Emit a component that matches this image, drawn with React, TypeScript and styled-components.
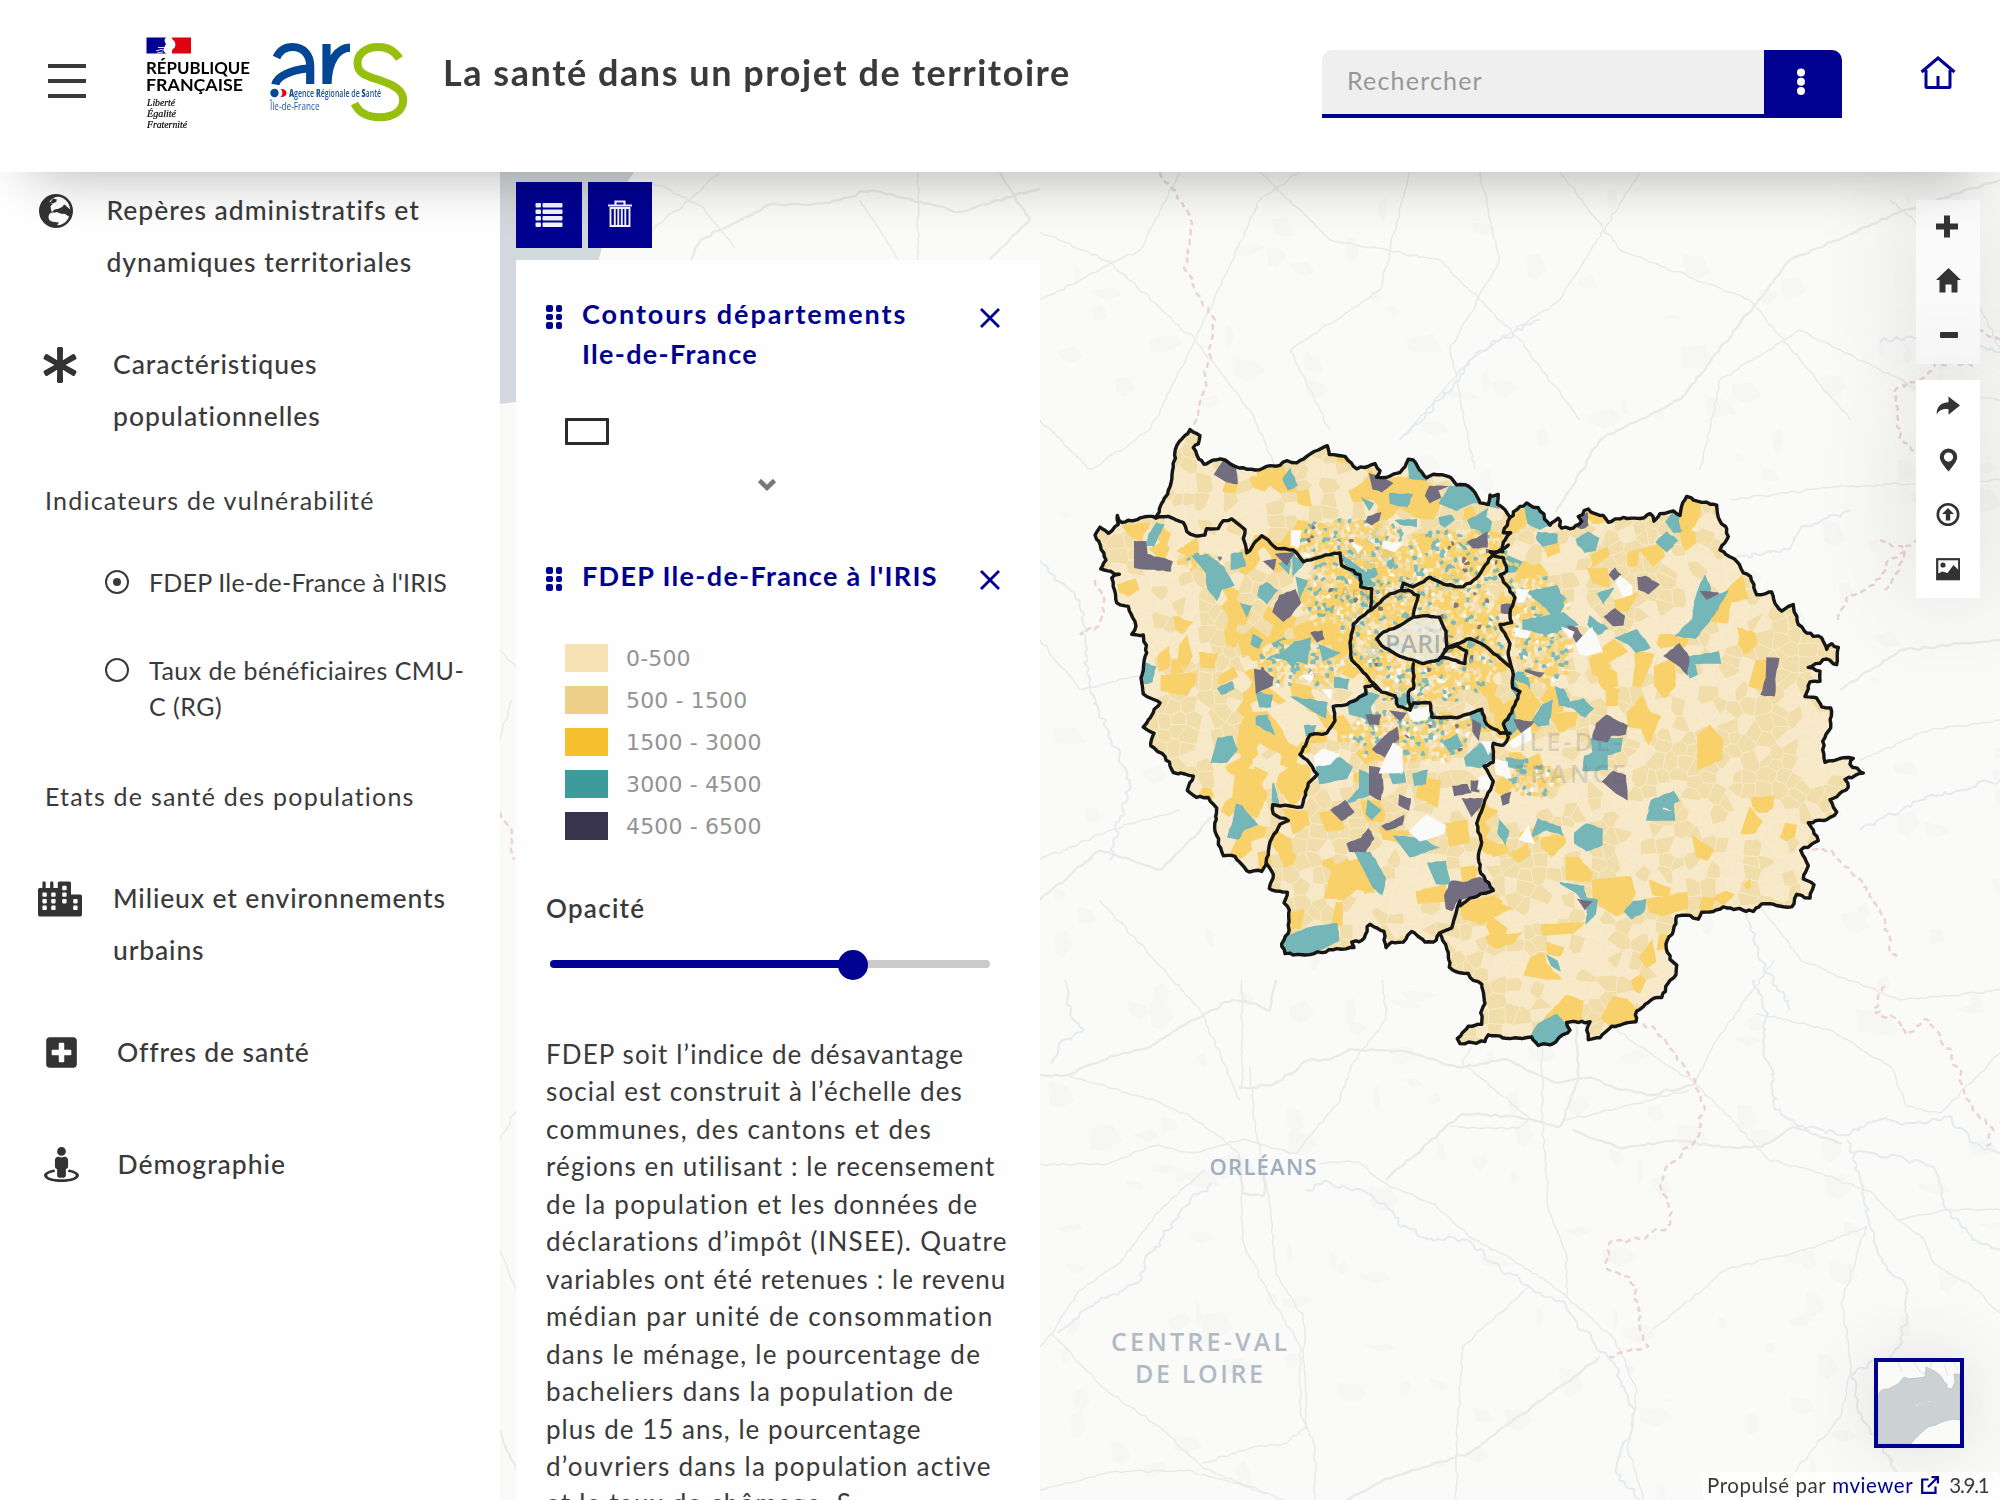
import React from "react";
import styled, { createGlobalStyle } from "styled-components";
import { FaAsterisk, FaCity, FaPlusSquare, FaStreetView } from "react-icons/fa";

const BLUE = "#000091";
const INK = "#3a3a3a";

const GlobalStyle = createGlobalStyle`
  * { box-sizing: border-box; }
  body { margin: 0; background: #fff; overflow: hidden; }
  h1, h2, p { margin: 0; }
  button { border: 0; padding: 0; font: inherit; background: none; }
`;

/* ---------- map geometry ---------- */

type Pt = [number, number];
type Frame = { x: number; y: number; sx: number; sy: number };
const WEST: Frame = { x: 1080, y: 410, sx: 3, sy: 2.8 };
const EAST: Frame = { x: 1460, y: 460, sx: 3, sy: 2.6133 };
const SOUTH: Frame = { x: 1040, y: 980, sx: 1.6333, sy: 3 };

const pts = (f: Frame, s: string): Pt[] =>
  s.trim().split(/\s+/).map((p) => {
    const [a, b] = p.split(",").map(Number);
    return [f.x + a / f.sx, f.y + b / f.sy];
  });
const raw = (s: string): Pt[] => s.trim().split(/\s+/).map((p) => p.split(",").map(Number) as Pt);

const rng = (seed: number) => () => {
  seed = (seed * 1664525 + 1013904223) >>> 0;
  return seed / 4294967296;
};

const roughen = (line: Pt[], amp: number, seed: number): Pt[] => {
  const r = rng(seed);
  const out: Pt[] = [line[0]];
  for (let i = 1; i < line.length; i++) {
    const [ax, ay] = line[i - 1];
    const [bx, by] = line[i];
    const n = Math.max(1, Math.round(Math.hypot(bx - ax, by - ay) / 4));
    for (let k = 1; k < n; k++) {
      const t = k / n;
      out.push([ax + (bx - ax) * t + (r() - 0.5) * amp, ay + (by - ay) * t + (r() - 0.5) * amp]);
    }
    out.push([bx, by]);
  }
  return out;
};
const toPath = (p: Pt[], close = false) =>
  "M" + p.map(([x, y]) => `${x.toFixed(1)} ${y.toFixed(1)}`).join("L") + (close ? "Z" : "");
const smooth = (p: Pt[]) => {
  let d = `M${p[0][0]} ${p[0][1]}`;
  for (let i = 1; i < p.length - 1; i++) {
    const mx = (p[i][0] + p[i + 1][0]) / 2;
    const my = (p[i][1] + p[i + 1][1]) / 2;
    d += `Q${p[i][0].toFixed(1)} ${p[i][1].toFixed(1)} ${mx.toFixed(1)} ${my.toFixed(1)}`;
  }
  const l = p[p.length - 1];
  return d + `L${l[0]} ${l[1]}`;
};

const northWest = pts(WEST, `228,302 250,255 270,215 280,160 290,100 330,55 360,72 355,95 340,105 350,125 372,152 400,140 435,140 465,158 525,168
  560,158 600,155 622,142 650,148 680,130 715,112 742,100 748,125 795,130 830,165 885,150 900,170 890,188 930,185 960,175 985,138 1000,140
  1040,190 1060,180 1110,188 1130,210 1165,213 1190,240 1200,260 1225,265 1230,238`);
const east = pts(EAST, `90,95 115,90 112,115 135,130 150,150 170,130 200,112 235,125 270,170 295,152 305,178 340,178 365,160 355,148 385,128
  405,140 430,145 445,163 490,150 540,153 570,140 582,160 600,140 640,133 660,145 665,120 680,95 715,108 770,118 775,150 800,180 805,200
  780,235 830,265 850,295 872,305 890,352 935,345 945,375 965,395 1000,378 1015,430 1040,452 1085,465 1100,495 1115,480 1135,490 1130,535
  1100,520 1045,542 1080,552 1080,578 1050,580 1035,618 1070,622 1085,645 1112,648 1112,700 1088,735 1095,790 1140,780 1180,780 1170,795
  1210,818 1155,835 1165,855 1110,888 1130,920 1100,940 1045,948 1075,995 1022,1020 1045,1060 1030,1095 1062,1110 1050,1145 1010,1135
  995,1168 905,1160 880,1180 790,1168 760,1180 725,1182 715,1200 690,1190 650,1192 640,1230 618,1265 630,1305 650,1320 648,1345 630,1360
  605,1405 575,1410 530,1440 528,1468 455,1480 420,1510 385,1515 380,1490 390,1468 320,1470 330,1490 280,1525 235,1530 215,1508 150,1512
  85,1502 75,1520 0,1525 -8,1512 25,1480 65,1475 62,1445 75,1420 65,1370 40,1360 25,1342 0,1340`);
const southWest = pts(WEST, `1108,1560 1105,1520 1078,1465 1060,1490 1035,1490 995,1460 970,1490 935,1490 918,1505 912,1460 870,1440 845,1485
  815,1490 822,1505 770,1508 690,1525 615,1522 605,1495 625,1465 628,1400 612,1380 622,1350 568,1340 580,1300 560,1270 545,1292 500,1290
  465,1250 430,1248 405,1180 410,1115 385,1085 350,1085 322,1065 340,1025 280,1015 255,970 212,940 222,905 190,888 240,820 190,795 183,750
  200,680 190,630 155,628 168,605 145,550 110,540 95,470 118,460 62,445 78,420 45,350 60,328 85,345 115,320 112,295 125,315 205,298 228,302`);
const region = toPath(roughen([...northWest, ...east, ...southWest], 2.2, 7), true);

const inner: Pt[][] = [
  pts(WEST, "228,302 265,298 310,315 320,340 345,352 375,350 380,332 415,332 430,310 455,305 495,335 490,360 500,400 515,385 545,352 590,388 640,392 670,425 750,405 780,400 785,435 840,462 842,495 875,500 872,560"),
  pts(WEST, "1000,575 1015,520 985,505 965,505 930,515 872,560 820,600 810,650 815,700 850,735 880,765 905,790 945,800 955,830 990,840 985,790 1000,780 1000,710"),
  pts(WEST, "890,640 910,622 950,608 1000,580 1040,576 1078,580 1098,620 1100,670 1075,700 1030,710 960,690 905,660 890,640"),
  pts(WEST, "1095,670 1130,660 1160,675 1155,710 1105,695 1080,695"),
  pts(WEST, "965,500 970,485 1000,495 1050,468 1100,490 1150,495 1190,470 1235,410 1285,378"),
  pts(EAST, "150,150 130,190 152,190 130,215 128,240 90,240 105,252 130,255 140,290 120,300 165,360 150,400 155,425 120,430 150,480 145,510 160,560 158,595 180,605 155,660 130,690 145,725 130,745 100,740 100,790 72,800 100,840 80,880 50,950 65,1000 55,1040 62,1080 100,1125 30,1145 0,1165"),
  pts(WEST, "1140,1375 1130,1400 1115,1450 1078,1465"),
  pts(WEST, "1100,665 1130,655 1170,640 1215,660 1260,695 1292,720"),
  pts(WEST, "990,840 1000,820 1050,820 1055,860 1130,862 1170,850 1205,838 1220,880 1260,905 1290,905"),
  pts(WEST, "900,785 880,770 855,775 858,795 800,825 760,830 765,870 740,905 690,910 660,965 690,990 712,1020 685,1045 665,1112 578,1105 580,1130 625,1150 600,1160 570,1210 558,1270"),
];

/* ---------- choropleth cells ---------- */

const PALETTE = ["#f7e9c8", "#f1dda9", "#f8d16a", "#74b6b8", "#736d80", "#fafaf9"];

const noise = (x: number, y: number) =>
  (Math.sin(x * 0.031 + y * 0.017) + Math.sin(y * 0.041 - x * 0.013 + 2) + Math.sin((x + y) * 0.023 + 5)) / 3;

const clip = (poly: Pt[], a: Pt, b: Pt): Pt[] => {
  const mx = (a[0] + b[0]) / 2;
  const my = (a[1] + b[1]) / 2;
  const nx = b[0] - a[0];
  const ny = b[1] - a[1];
  const side = (p: Pt) => (p[0] - mx) * nx + (p[1] - my) * ny;
  const out: Pt[] = [];
  poly.forEach((p, i) => {
    const q = poly[(i + 1) % poly.length];
    const s = side(p);
    const t = side(q);
    if (s <= 0) out.push(p);
    if ((s < 0 && t > 0) || (s > 0 && t < 0)) {
      const k = s / (s - t);
      out.push([p[0] + (q[0] - p[0]) * k, p[1] + (q[1] - p[1]) * k]);
    }
  });
  return out;
};

type Box = [number, number, number, number];
const cells = (box: Box, step: number, seed: number, pick: (x: number, y: number, r: number) => number) => {
  const r = rng(seed);
  const cols = Math.ceil((box[2] - box[0]) / step);
  const rows = Math.ceil((box[3] - box[1]) / step);
  const seeds: Pt[][] = [];
  for (let j = 0; j < rows; j++) {
    seeds.push([]);
    for (let i = 0; i < cols; i++) seeds[j].push([box[0] + (i + 0.05 + r() * 0.9) * step, box[1] + (j + 0.05 + r() * 0.9) * step]);
  }
  const out = PALETTE.map(() => "");
  for (let j = 0; j < rows; j++)
    for (let i = 0; i < cols; i++) {
      const c = seeds[j][i];
      const k = pick(c[0], c[1], r());
      if (k < 0) continue;
      const w = step * 1.6;
      let poly: Pt[] = [[c[0] - w, c[1] - w], [c[0] + w, c[1] - w], [c[0] + w, c[1] + w], [c[0] - w, c[1] + w]];
      for (let dj = -2; dj <= 2; dj++)
        for (let di = -2; di <= 2; di++) {
          const o = seeds[j + dj]?.[i + di];
          if (o && (di || dj)) poly = clip(poly, c, o);
        }
      if (poly.length > 2) out[k] += toPath(poly, true);
    }
  return out;
};

const gauss = (x: number, y: number, cx: number, cy: number, s: number) =>
  Math.exp(-((x - cx) ** 2 + (y - cy) ** 2) / (s * s));

const coarse = cells([1085, 420, 1880, 1055], 14, 11, (x, y, r) => {
  const near = gauss(x, y, 1415, 610, 115);
  const yellow = 0.025 + 0.5 * near + 0.04 * noise(x * 1.7, y * 1.7) + (x < 1310 && x > 1230 && y > 540 ? 0.1 : 0);
  const teal = 0.001 + 0.07 * near;
  if (r < teal) return 3;
  if (r < teal + yellow) return 2;
  const u = (r - teal - yellow) / (1 - teal - yellow);
  return u < 0.52 - 0.5 * noise(x, y) ? 1 : 0;
});

const urban: [number, number, number, number][] = [
  [1425, 632, 82, 70], [1350, 545, 58, 26], [1450, 560, 62, 30], [1410, 735, 65, 26], [1545, 635, 30, 50],
  [1300, 665, 42, 22], [1200, 562, 22, 10], [1535, 780, 26, 16], [1330, 600, 30, 26], [1530, 590, 30, 14],
];
const fine = cells([1170, 500, 1600, 820], 3.8, 23, (x, y, r) => {
  const inside = urban.some(([cx, cy, rx, ry]) => ((x - cx) / rx) ** 2 + ((y - cy) / ry) ** 2 < 1 + 0.3 * noise(x * 7, y * 7));
  if (!inside) return -1;
  const n = noise(x * 6, y * 6) * 0.1;
  if (r < 0.44) return 2;
  if (r < 0.64) return 0;
  if (r < 0.83 - n) return 1;
  if (r < 0.955) return 3;
  if (r < 0.966) return 4;
  return 5;
});

const patch = (f: Frame, fill: number, list: string[]) => ({ fill, d: list.map((s) => toPath(roughen(pts(f, s), 1.2, s.length), true)).join("") });
const patches = [
  patch(WEST, 2, [
    "530,170 610,160 615,185 590,205 540,200", "810,230 870,190 860,160 890,190 960,200 1000,180 1050,210 1080,260 1060,305 1010,300 960,270 930,300 880,250 820,255",
    "745,470 790,445 835,465 840,500 840,560 800,575 745,570 700,590 690,545 720,520", "130,325 205,318 180,365 150,350", "295,395 350,360 355,410 320,405",
    "115,490 165,475 175,500 145,520 120,510", "285,580 335,595 305,625 288,612", "300,660 320,635 335,690 315,722 296,700", "235,690 265,665 268,715 240,730",
    "245,745 345,738 345,760 320,798 245,785", "360,680 410,685 400,720 365,718", "420,745 460,722 472,745 430,765 415,765", "440,560 480,540 510,570 490,600 450,590",
    "475,640 510,620 515,680 490,690", "600,650 650,640 640,610 700,590 720,630 640,690 600,680", "470,1000 520,1010 560,1080 530,1140 480,1110 460,1080", "500,850 560,845 600,890 620,930 660,950 640,1000 600,960 540,930 470,960 480,890",
    "600,1020 650,990 690,1010 680,1060 640,1110 590,1050", "580,1180 630,1200 635,1230 600,1240 580,1220", "610,1120 680,1125 685,1160 640,1185 630,1150", "720,1130 770,1120 790,1170 740,1178",
    "760,1280 800,1260 870,1300 880,1350 830,1340 790,1370 735,1365", "1010,1350 1095,1330 1095,1375 1015,1380", "630,1410 670,1400 660,1450 635,1450", "770,1380 785,1380 785,1440 755,1450", "1100,1160 1160,1150 1165,1210 1110,1220", "830,960 880,930 900,970 860,990",
    "1020,1030 1080,1040 1070,1110 1010,1080", "1150,1400 1230,1370 1290,1395 1200,1440", "900,1170 960,1180 990,1180 960,1210 910,1200",
  ]),
  patch(EAST, 2, [
    "135,190 170,130 200,130 195,170 150,195", "255,230 295,220 298,240 265,252", "385,130 440,160 400,165 385,150", "660,160 668,120 690,95 720,120 715,150 690,185 665,180", "505,245 535,235 530,275 505,275", "540,235 600,222 612,250 580,275",
    "395,250 440,230 445,250 400,275", "385,285 440,285 448,330 400,320", "750,420 790,350 845,305 862,360 810,370 800,425", "465,370 530,350 500,395 470,390", "835,440 872,450 870,500 852,505", "870,590 890,525 930,525 905,600",
    "390,520 460,470 500,500 440,530 455,565 400,560", "525,495 580,510 550,575 530,560", "585,540 640,520 645,590 615,620 585,590", "440,590 475,600 470,640 440,640", "505,660 545,620 570,660 600,670 580,710 565,740 545,700 505,695",
    "715,720 750,695 785,730 785,780 715,808", "270,665 350,660 345,690 300,710", "875,885 940,880 935,910 880,905", "870,910 905,945 880,975 845,975", "700,985 760,1020 740,1045 710,1035", "855,1110 868,1100 870,1115 860,1118",
    "400,1100 510,1090 525,1130 500,1180 470,1190 400,1150", "320,1040 355,1040 395,1080 390,1100 320,1095", "570,1100 630,1120 625,1140 580,1135", "560,1150 680,1130 680,1170 610,1190 570,1180", "245,1215 370,1210 340,1235 250,1240", "80,1245 180,1238 160,1260 110,1275 85,1262",
    "195,1345 215,1300 250,1290 260,1320 300,1355 255,1355", "262,1262 310,1275 300,1295 265,1290", "540,1300 575,1258 585,1310 560,1325", "255,1460 320,1400 368,1415 360,1465 320,1470 300,1480", "425,1460 460,1405 500,1410 530,1440 528,1468 455,1480",
    "0,1160 100,1140 125,1155 90,1175 40,1205 10,1195", "75,1010 135,1005 145,1025 100,1035", "150,1030 200,1005 208,1030 175,1050", "245,990 310,980 315,1000 275,1035 245,1010", "105,660 185,610 170,580 200,590 240,640 220,660 240,700 200,720 165,740 110,720",
  ]),
  patch(WEST, 3, [
    "230,318 250,322 220,380 195,378 215,340", "610,195 630,168 650,210 625,222", "985,140 1000,150 1035,195 990,190", "930,235 995,238 980,270 932,260", "1080,260 1110,215 1160,220 1195,250 1130,280", "1165,310 1220,280 1210,330 1175,330", "850,250 878,262 868,278", "950,310 1008,308 1008,325 960,318",
    "340,410 380,405 430,440 460,490 425,500 410,530 385,500 380,455", "455,405 485,400 495,435 455,445", "540,495 560,485 590,505 560,540 535,520", "485,545 512,550 500,575", "520,630 545,645 535,665 515,655", "195,710 225,720 215,760 190,765", "415,780 455,762 460,780 425,795",
    "645,650 690,640 680,710 650,700 640,720 620,700 580,690 610,680", "720,660 775,680 730,700", "530,790 575,800 570,830 540,830", "530,860 560,855 580,905 530,880", "640,805 740,820 735,860 680,830", "415,920 455,915 470,950 440,985 395,985", "470,1105 485,1110 530,1160 490,1175 475,1200 445,1195 460,1155", "580,1045 595,1105 578,1095",
    "675,885 705,885 700,910 680,910", "765,750 805,755 800,780 765,775", "805,820 860,790 895,800 870,830 880,890 850,860 810,850", "710,1000 780,975 815,1000 800,1030 720,1045", "840,1010 865,1020 870,1075 800,1100 840,1060", "825,1235 870,1240 915,1310 905,1355 880,1335", "945,1195 1020,1200 1070,1225 990,1250", "1045,1270 1095,1265 1108,1325 1070,1325",
    "865,1095 900,1120 875,1145 860,1130", "1090,930 1130,910 1145,940 1110,955", "1155,975 1200,935 1240,970 1200,1000 1160,995", "1000,1020 1040,1010 1035,1045 1005,1050", "930,1020 970,1015 975,1040 940,1045", "610,1480 690,1450 770,1440 775,1485 690,1525 600,1530", "1170,850 1205,838 1215,890 1180,880", "640,410 670,430 640,460", "790,410 850,450 880,490 850,490 800,440", "600,430 630,425 625,455", "650,470 680,480 660,520",
  ]),
  patch(EAST, 3, [
    "0,62 20,70 55,110 0,112", "90,90 112,92 115,125 90,120", "195,118 240,130 265,170 240,180 205,165", "235,190 290,195 290,215 250,225 230,205", "350,208 385,190 415,205 405,235 375,240 355,222", "590,215 620,190 650,210 620,238", "415,350 460,335 430,372", "205,345 290,330 310,380 290,415 250,380", "190,420 310,400 350,430 260,455 190,440",
    "720,330 735,305 750,335 745,362 800,345 760,405 738,430 705,465 650,458 700,415 705,370", "470,465 530,445 568,490 530,502 505,480", "690,515 775,503 780,530 700,530 710,560 690,568 680,545", "288,595 310,600 330,635 370,625 398,650 375,670 335,645 300,640", "220,680 250,640 275,630 265,690 235,695", "395,730 485,728 480,760 440,770 440,808 370,810 375,775 400,765",
    "562,940 575,890 640,868 655,890 640,895 640,915 610,905 600,915 640,920 642,940", "345,975 380,952 425,965 425,1005 380,1020 345,1000", "120,945 145,970 135,1000 115,975", "235,940 300,960 305,978 260,965 215,985", "300,1105 370,1115 375,1145 410,1150 405,1185 380,1208 385,1165 350,1130", "495,1180 520,1155 555,1150 550,1180 515,1198",
    "215,1505 235,1475 290,1450 325,1485 280,1525 235,1530", "265,1298 290,1310 298,1332 275,1320", "130,685 160,655 170,700 150,720", "140,780 190,785 185,805 145,800", "390,410 440,440 415,455 385,430",
  ]),
  patch(WEST, 4, [
    "405,180 430,145 465,158 470,205 440,200", "870,180 900,188 935,205 905,228 880,220", "1038,240 1050,215 1095,215 1070,225 1080,245 1050,258", "865,300 900,290 895,308 875,320 860,312", "165,370 195,370 200,405 275,425 270,450 165,440", "555,425 585,420 580,445", "590,405 640,400 620,432", "580,565 600,520 645,505 660,540 625,580 610,590", "695,625 725,620 730,640 712,648",
    "525,728 548,730 578,750 575,770 530,790", "860,855 900,855 895,880 870,878", "915,915 950,890 955,920 935,935 915,970 880,950", "870,1000 900,1005 908,1060 900,1090 870,1075", "755,1120 795,1095 820,1125 785,1148", "960,1080 990,1090 985,1118 958,1105", "908,1165 970,1138 965,1160 920,1175", "803,1215 845,1200 865,1175 880,1200 855,1235 810,1235",
    "1095,1360 1115,1320 1150,1325 1200,1310 1240,1340 1130,1375 1115,1400 1100,1395", "1165,370 1220,345 1220,382 1180,385", "1120,1055 1160,1050 1170,1070 1125,1078", "1150,1090 1205,1090 1200,1110 1175,1135", "1175,1040 1195,1040 1195,1068 1175,1065", "935,845 975,850 960,868", "1180,870 1200,880 1195,920 1180,900",
  ]),
  patch(EAST, 4, [
    "345,172 380,140 382,170 365,178", "535,308 555,305 595,325 565,348 538,338", "435,410 465,390 492,408 488,430 460,432", "325,435 350,440 365,460 350,475", "615,512 658,482 685,515 680,558 655,535", "725,345 775,348 740,362", "922,518 955,520 945,560 942,615 905,612 920,570", "165,680 218,685 190,720 175,700",
    "400,720 410,690 440,668 500,695 495,715 450,720 440,735 400,728", "430,840 460,815 495,825 500,885 470,870", "358,1150 392,1155 375,1172", "195,550 248,558 240,566", "450,300 465,285 480,300 462,312", "125,380 150,378 145,400 125,398", "125,880 150,870 145,895 130,900",
  ]),
  patch(EAST, 5, [
    "350,480 395,440 425,500 380,510 360,505", "170,340 205,340 190,370 175,370", "480,305 515,330 515,350 490,355 470,320", "150,740 210,700 210,730 160,750", "105,785 140,790 150,830 110,820", "310,440 340,450 330,465", "165,440 210,450 200,465 168,458", "205,960 220,1000 180,990",
  ]),
  patch(WEST, 5, [
    "635,340 662,340 655,382 635,378", "910,370 965,375 945,395 910,385", "705,970 730,950 775,965 750,990 708,995", "920,970 940,935 965,950 965,1015 900,1015", "985,845 1050,830 1040,865 1000,870", "990,1180 1040,1135 1095,1165 1090,1185 1020,1205", "1210,930 1240,930 1225,960", "1200,1030 1230,1020 1225,1060 1195,1060", "820,375 845,385 835,398", "670,745 700,742 690,760", "730,785 755,785 750,805",
  ]),
];

/* ---------- base map lines ---------- */

const roads: Pt[][] = [
  pts(SOUTH, "0,285 45,285 100,240 180,200 240,130 315,58 350,70 375,95 385,0"),
  pts(SOUTH, "45,285 200,370 265,430 325,520"), pts(SOUTH, "0,553 110,553 190,495 250,520 330,478 380,505 420,520 440,470 490,360 510,250 565,120 560,0"),
  pts(SOUTH, "330,320 330,0"), pts(SOUTH, "343,260 350,420 375,660 385,880 430,1010 435,1340 400,1390 350,1400 265,1450"),
  pts(SOUTH, "325,325 380,315 440,240 475,240 510,207 590,212 680,260 765,240 840,308 900,292 940,325 1000,345 1070,310"),
  pts(SOUTH, "1070,310 950,160 870,50"), pts(SOUTH, "1070,310 1105,180 1165,30 1200,-60"), pts(SOUTH, "1070,310 1130,420 1190,540 1260,570 1360,640 1400,720 1440,770 1460,850 1530,930 1568,1000"),
  pts(SOUTH, "330,640 330,780 370,930 425,1100 425,1300 450,1400 448,1560"), pts(SOUTH, "325,520 330,640 365,650 365,560"),
  pts(SOUTH, "270,570 190,700 130,850 60,940 20,1060 0,1100"), pts(SOUTH, "20,1060 100,1220 200,1350 265,1460 300,1490 400,1560"), pts(SOUTH, "0,1530 120,1475 240,1470 300,1500 370,1540"),
  pts(SOUTH, "455,550 520,545 570,620 640,670 710,780 800,870 860,950 940,1080 975,1230 960,1400 985,1560"), pts(SOUTH, "565,600 690,400 800,415 850,440 880,290 870,0"),
  pts(SOUTH, "820,0 820,400 830,680 860,830 860,950"), pts(SOUTH, "670,440 780,445 800,415 690,250 705,200"), pts(SOUTH, "800,920 690,1100 680,1400 680,1560"), pts(SOUTH, "860,420 950,380 1060,330"),
  pts(SOUTH, "870,450 950,505 1040,480 1100,500 1180,500 1230,440 1310,490"), pts(SOUTH, "1000,1050 1120,870 1250,810 1350,740"), pts(SOUTH, "1350,740 1310,960 1325,1160 1310,1300 1230,1480 1200,1560"), pts(SOUTH, "1400,720 1480,690 1568,690"), pts(SOUTH, "1170,100 1290,150 1390,260 1415,380 1470,400 1568,220"),
  pts(SOUTH, "915,1130 850,1220 790,1300 700,1420 560,1500 500,1560"),
  raw("1040,232 1110,262 1195,340 1250,410 1290,500"), raw("1040,420 1090,470 1150,430 1200,330 1260,200 1300,172"), raw("1330,430 1290,350 1380,290 1410,172"), raw("1400,440 1470,360 1560,300 1640,172"),
  raw("1556,512 1600,440 1680,400 1790,260 1900,212 2000,180"), raw("1730,500 1830,487 2000,480"), raw("1700,470 1720,380 1800,330 1920,390 2000,400"), raw("1890,200 1960,260 2000,350"), raw("1480,172 1500,260 1450,350 1475,470"),
  raw("1840,690 1900,650 2000,640"), raw("1860,760 1930,730 2000,720"), raw("1740,880 1800,960 1900,1000 2000,990"), raw("1040,640 1080,690 1144,674"), raw("1040,860 1110,830 1180,810"), raw("1040,900 1100,850 1160,870 1220,810"),
  raw("1040,300 1140,250 1180,172"), raw("1260,172 1330,240 1440,260 1520,340 1580,420"), raw("1560,172 1620,250 1750,300 1850,420"), raw("1100,900 1200,1010 1240,1100"),
  raw("690,262 700,240 720,230 770,205 830,203 870,190 960,212 1040,188"), raw("640,240 690,200 720,172"), raw("652,182 700,205 735,248"), raw("860,200 900,262"), raw("918,172 918,260"), raw("990,260 1030,220 1000,172"),
  raw("500,650 516,668"), raw("500,740 512,700"), raw("500,1140 516,1110"), raw("500,1250 516,1290"), raw("500,1430 516,1470"),
];
const rivers: Pt[][] = [
  pts(SOUTH, "280,610 230,690 210,750 170,850 160,910 90,965 30,1060"), pts(SOUTH, "435,630 470,605 540,640 565,680 590,740 640,775 700,780 740,850 800,920 860,980 900,1080 940,1160 970,1300 940,1480 980,1560"),
  pts(SOUTH, "20,250 30,200 70,155 50,100 40,0"), pts(SOUTH, "1165,0 1190,100 1180,180 1200,300 1200,390 1240,440 1310,465 1370,420 1430,430 1480,410 1530,490 1568,520"), pts(SOUTH, "1320,480 1340,600 1365,800 1390,880 1415,920 1410,1060 1390,1130 1325,1180 1340,1300 1400,1480"),
  pts(SOUTH, "1330,520 1400,530 1460,560 1480,690 1530,780 1568,810"), raw("1880,342 1910,336 1930,350 1980,345 2000,352"), raw("1700,540 1730,560 1790,550 1800,530 1850,510"), raw("1860,830 1920,800 2000,780"), raw("1040,560 1080,600 1090,690 1130,780 1110,860"), raw("1400,440 1440,400 1480,350 1540,320"), raw("1700,865 1740,890 1760,960 1790,1010"),
];
const borders: Pt[][] = [
  raw("1160,172 1190,215 1185,270 1215,320 1205,380 1195,425"), pts(SOUTH, "985,130 1020,170 1040,240 1070,310 1085,380 1070,480 1030,550 1015,610 1030,690 1025,745 980,775 930,790 925,860 960,890 980,980 980,1050 995,1100 930,1130"), pts(SOUTH, "1380,20 1360,90 1400,120 1415,165 1445,115 1470,170 1500,260 1510,340 1530,400 1555,440 1548,510"),
  raw("1838,620 1850,595 1875,585 1890,560 1920,540 1950,530"), raw("1973,366 1955,362 1935,365 1920,380 1895,390 1900,440 1915,450"), raw("1812,850 1830,850 1850,870 1880,910 1895,960"), raw("1880,540 1905,550 1900,570 1885,590"), raw("1095,580 1105,600 1100,625 1080,635"), raw("1950,355 1975,330 2000,340"), raw("500,812 512,830 514,860"),
];

const woods = (() => {
  const r = rng(91);
  let d = "";
  for (let i = 0; i < 260; i++) {
    const x = 1045 + r() * 950;
    const y = 180 + r() * 1310;
    const w = 4 + r() * 22;
    d += `M${x} ${y}l${w} ${(r() - 0.6) * 12}l${w * 0.4} ${4 + r() * 14}l${-w * 0.7} ${r() * 12}l${-w * 0.6} ${-r() * 8}Z`;
  }
  return d;
})();

const MapCanvas = () => (
  <Canvas viewBox="500 172 1500 1328">
    <defs>
      <clipPath id="region"><path d={region} /></clipPath>
      <filter id="soften"><feGaussianBlur stdDeviation="0.7" /></filter>
    </defs>
    <rect x="500" y="172" width="1500" height="1328" fill="#fafaf9" />
    <path d="M500 172H634L626 184 612 212 598 262 560 330 516 402 500 404Z" fill="#d2d9dc" />
    <path d={woods} fill="#f6f7f5" />
    <g fill="none" strokeLinejoin="round">
      {roads.map((p, i) => <path key={i} d={smooth(roughen(p, 3, i + 3))} stroke="#e9eaea" strokeWidth={i % 5 === 0 ? 2.4 : 1.5} />)}
      {rivers.map((p, i) => <path key={i} d={smooth(roughen(p, 7, i + 60))} stroke="#e6ebee" strokeWidth="2" />)}
      {borders.map((p, i) => <path key={i} d={smooth(roughen(p, 6, i + 40))} stroke="#ecd2d7" strokeWidth="2.4" strokeDasharray="6 4" />)}
    </g>
    <g fontFamily="'Open Sans', sans-serif" fontWeight="600" fill="#b0bac5" textAnchor="middle">
      <text x="1263" y="1175" fontSize="22" textLength="107" fill="#9fadbd">ORLÉANS</text>
      <text x="1199" y="1351" fontSize="25" textLength="176">CENTRE-VAL</text>
      <text x="1199" y="1383" fontSize="25" textLength="128">DE LOIRE</text>
    </g>
    <g filter="url(#soften)">
      <g clipPath="url(#region)">
        <rect x="1085" y="420" width="800" height="640" fill="#f4e4bb" />
        {coarse.map((d, i) => <path key={i} d={d} fill={PALETTE[i]} stroke={i > 1 ? PALETTE[i] : "#f8edd2"} strokeWidth="0.5" />)}
        {patches.slice(0, 2).map((p, i) => <path key={i} d={p.d} fill={PALETTE[p.fill]} stroke={PALETTE[p.fill]} strokeWidth="2" />)}
        <g opacity="0.9">{fine.map((d, i) => <path key={i} d={d} fill={PALETTE[i]} />)}</g>
        {patches.slice(2).map((p, i) => <path key={i} d={p.d} fill={PALETTE[p.fill]} stroke={PALETTE[p.fill]} strokeWidth="2" />)}
        <path d={toPath(inner[2], true)} fill="#e9ece6" opacity="0.75" />
      </g>
    </g>
    <g fontFamily="'Open Sans', sans-serif" fontWeight="600" textAnchor="middle" fill="#5e6a78" filter="url(#soften)">
      <text x="1420" y="653" fontSize="25" textLength="70" opacity="0.42">PARIS</text>
      <text x="1570" y="751" fontSize="25" textLength="102" opacity="0.2">ILE-DE-</text>
      <text x="1570" y="783" fontSize="25" textLength="112" opacity="0.2">FRANCE</text>
      <text x="1386" y="598" fontSize="16" textLength="92" opacity="0.2">Argenteuil</text>
    </g>
    <g fill="none" stroke="#141414" strokeWidth="3.4" strokeLinejoin="round" strokeLinecap="round" filter="url(#soften)">
      <path d={region} />
      {inner.map((p, i) => <path key={i} d={toPath(roughen(p, i === 2 ? 0.8 : 1.6, i + 20))} />)}
    </g>
  </Canvas>
);

/* ---------- header ---------- */

const Page = styled.div`
  width: 2000px;
  height: 1500px;
  display: flex;
  flex-direction: column;
  overflow: hidden;
  color: ${INK};
  font-family: Lato, "Open Sans", sans-serif;
`;
const Header = styled.header`
  position: relative;
  z-index: 2;
  flex: none;
  height: 172px;
  display: flex;
  align-items: flex-start;
  background: #fff;
  box-shadow: 0 30px 60px -30px rgba(0, 0, 0, 0.32);
`;
const MenuButton = styled.button`
  display: flex;
  flex-direction: column;
  gap: 11px;
  margin: 64px 60px 0 48px;
  width: 38px;
`;
const MenuBar = styled.span`
  height: 4px;
  background: #3a3a3a;
`;
const Logos = styled.svg`
  width: 262px;
  height: 100px;
  margin-top: 34px;
  flex: none;
`;
const SiteTitle = styled.h1`
  width: 879px;
  margin: 49px 0 0 35px;
  font-size: 36px;
  line-height: 46px;
  font-weight: 700;
  white-space: nowrap;
  letter-spacing: 1.55px;
`;
const Search = styled.div`
  width: 520px;
  height: 68px;
  margin-top: 50px;
  display: flex;
  border-bottom: 4px solid ${BLUE};
  border-radius: 10px 10px 0 0;
  overflow: hidden;
`;
const Field = styled.div`
  flex: 1;
  padding-left: 25px;
  font-size: 25px;
  line-height: 60px;
  letter-spacing: 1.2px;
  color: #979797;
  background: #efefef;
`;
const SearchOptions = styled.button`
  width: 78px;
  padding-right: 4px;
  display: flex;
  align-items: center;
  justify-content: center;
  background: ${BLUE};
`;
const HomeLink = styled.svg`
  margin: 53px 0 0 78px;
  width: 36px;
  height: 38px;
`;

const Brand = () => (
  <Logos viewBox="146 34 262 100">
    <rect x="146.500" y="37.500" width="20" height="16" fill="#000091" />
    <rect x="172" y="37.500" width="19" height="16" fill="#e1000f" />
    <path d="M166 37.500C164 39 164 42 166 44C164 47 162 51 166 53.500H171C170 50 174 49 175 47C176 44 175 41 173 40C172 38 171 37.500 170 37.500Z" fill="#fff" />
    <path d="M156 51l5-1.500 5 1M158 47.500l6 0M157 53l6-1" stroke="#fff" strokeWidth="0.9" fill="none" />
    <g fontFamily="Lato, sans-serif" fontWeight="700" fontSize="17" fill="#000">
      <text x="146" y="73.500" textLength="104" lengthAdjust="spacingAndGlyphs">RÉPUBLIQUE</text>
      <text x="146" y="91" textLength="97" lengthAdjust="spacingAndGlyphs">FRANÇAISE</text>
    </g>
    <g fontFamily="'Liberation Serif', serif" fontStyle="italic" fontSize="10" fill="#000" stroke="#000" strokeWidth="0.2">
      <text x="147" y="106" textLength="28" lengthAdjust="spacingAndGlyphs">Liberté</text>
      <text x="147" y="117" textLength="29" lengthAdjust="spacingAndGlyphs">Égalité</text>
      <text x="147" y="128" textLength="40" lengthAdjust="spacingAndGlyphs">Fraternité</text>
    </g>
    <g fill="none" stroke="#034694" strokeWidth="8.200">
      <path d="M276.500 57.500C280 50 286 47 292.500 47C303.500 47 310.200 55 310.200 66V84" />
      <path d="M307 68.500C292 70 277 76 275.300 84.500" />
      <path d="M326.500 44V84M327.500 84C328 60 338 48 350 47.700" />
    </g>
    <path d="M399.500 58.500C394 50 387 47 378 47C366 47 357.500 54 357.500 63C357.500 74 367 76 379 80C394 85 403.200 90 403.200 100C403.200 111 393 117.300 380 117.300C368 117.300 359 113 354.500 103.500" fill="none" stroke="#97bf0d" strokeWidth="8" />
    <circle cx="274.500" cy="93" r="4.200" fill="#034694" />
    <path d="M280.500 89C285 89 286.500 91 286.500 93S285 97 280.500 97C283 95 283 91 280.500 89Z" fill="#e1000f" />
    <g fontFamily="'Open Sans', sans-serif" fontSize="10" fill="#1d4f9c">
      <text x="289" y="97.200" fontWeight="600" textLength="92" lengthAdjust="spacingAndGlyphs">
        <tspan fontWeight="800">A</tspan>gence <tspan fontWeight="800">R</tspan>égionale de <tspan fontWeight="800">S</tspan>anté
      </text>
      <text x="270" y="109.500" textLength="49.500" fontWeight="500" lengthAdjust="spacingAndGlyphs">Île-de-France</text>
    </g>
  </Logos>
);

/* ---------- side navigation ---------- */

const Body = styled.div`
  flex: 1;
  display: flex;
  min-height: 0;
`;
const Sidebar = styled.nav`
  width: 500px;
  flex: none;
  padding-top: 12px;
  background: #fff;
`;
const Theme = styled.div<{ $gap?: number }>`
  display: flex;
  margin-top: ${(p) => p.$gap ?? 0}px;
`;
const ThemeIcon = styled.span<{ $inset: number; $slot: number }>`
  flex: none;
  width: ${(p) => p.$slot}px;
  height: 53px;
  padding-left: ${(p) => p.$inset}px;
  display: flex;
  align-items: center;
`;
const ThemeLabel = styled.span<{ $track?: number }>`
  width: 350px;
  font-size: 26.5px;
  line-height: 52px;
  font-weight: 500;
  letter-spacing: ${(p) => p.$track ?? 0.98}px;
`;
const Group = styled.div<{ $gap: number }>`
  margin: ${(p) => p.$gap}px 0 0 45px;
  font-size: 25px;
  line-height: 36px;
  letter-spacing: 1.22px;
`;
const Choice = styled.label<{ $gap: number; $track: number }>`
  display: flex;
  margin: ${(p) => p.$gap}px 0 0 105px;
  font-size: 25px;
  line-height: 36px;
  letter-spacing: ${(p) => p.$track}px;
`;
const Radio = styled.span`
  flex: none;
  width: 24px;
  height: 24px;
  margin: 6px 20px 0 0;
  border: 2px solid ${INK};
  border-radius: 50%;
  display: flex;
  align-items: center;
  justify-content: center;
`;
const RadioDot = styled.span`
  width: 8px;
  height: 8px;
  border-radius: 50%;
  background: ${INK};
`;

const Globe = () => (
  <svg width="34" height="34" viewBox="0 0 34 34">
    <circle cx="17" cy="17" r="17" fill="#333" />
    <path d="M10.500 7.500C13 4.500 16 2.800 19 2.700C25 3 30.500 8 31.300 15.500L29.500 14L27.500 12.500L26 10.500L24 11.500L23.500 13.500L20.500 15L15.500 15.500L13 18L12 16L11.500 12L13.500 10.500L12 9Z" fill="#fff" />
    <path d="M14 4.500L18 5.500L17 8L13.500 9.500L11 9Z" fill="#333" />
    <path d="M9.500 23C9.500 19.500 12.500 18 15.500 18.800L20 17L23 19L26 20L30 22.500C28.500 27.500 23.500 31.300 18 31.300L20 28.500L14 27.800C11.500 27.500 9.500 26 9.500 23Z" fill="#fff" />
    <path d="M15 16.500L20 14.500L25 12L27 14L24.500 16L26.500 19L23 20L19 18.500Z" fill="#333" />
  </svg>
);

/* ---------- map overlays ---------- */

const MapArea = styled.main`
  position: relative;
  flex: 1;
  min-width: 0;
  display: flex;
  justify-content: space-between;
`;
const Canvas = styled.svg`
  position: absolute;
  inset: 0;
  width: 1500px;
  height: 1328px;
`;
const LegendColumn = styled.section`
  position: relative;
  width: 524px;
  margin-left: 16px;
  padding-top: 10px;
  display: flex;
  flex-direction: column;
`;
const ToolRow = styled.div`
  display: flex;
  gap: 6px;
  margin-bottom: 12px;
`;
const ToolButton = styled.button<{ $w: number }>`
  width: ${(p) => p.$w}px;
  height: 66px;
  display: flex;
  align-items: center;
  justify-content: center;
  background: ${BLUE};
`;
const Legend = styled.div`
  flex: 1;
  min-height: 0;
  overflow: hidden;
  padding: 34px 30px 0;
  background: #fefefe;
`;
const LayerHead = styled.div<{ $gap?: number }>`
  display: flex;
  margin-top: ${(p) => p.$gap ?? 0}px;
`;
const Handle = styled.span`
  display: grid;
  grid-template-columns: 6.5px 6.5px;
  grid-auto-rows: 6.5px;
  gap: 2px 3px;
  margin: 11px 20px 0 0;
`;
const HandleDot = styled.i`
  background: ${BLUE};
  border-radius: 2px;
`;
const LayerTitle = styled.h2`
  flex: 1;
  font-size: 27px;
  line-height: 40px;
  font-weight: 700;
  color: ${BLUE};
  white-space: nowrap;
`;
const TitleLine = styled.span<{ $track: number }>`
  display: block;
  letter-spacing: ${(p) => p.$track}px;
`;
const CloseIcon = styled.svg`
  flex: none;
  width: 20px;
  height: 20px;
  margin: 14px 10px 0 0;
`;
const OutlineKey = styled.div`
  width: 44px;
  height: 27px;
  margin: 44px 0 0 19px;
  border: 3px solid #2b2b2b;
  border-radius: 1px;
  filter: blur(0.6px);
`;
const Expand = styled.svg`
  display: block;
  width: 20px;
  height: 14px;
  margin: 33px auto 0 211px;
`;
const Classes = styled.ul`
  list-style: none;
  margin: 41px 0 0 19px;
  padding: 0;
`;
const ClassRow = styled.li`
  height: 42px;
  display: flex;
  align-items: center;
  gap: 18px;
  font: 22px "DejaVu Sans", sans-serif;
  letter-spacing: 0.15px;
  color: #939393;
`;
const Swatch = styled.span<{ $color: string }>`
  width: 43px;
  height: 28px;
  background: ${(p) => p.$color};
`;
const OpacityLabel = styled.div`
  margin-top: 43px;
  font-size: 26px;
  line-height: 36px;
  font-weight: 600;
  letter-spacing: 1.25px;
`;
const Slider = styled.div`
  height: 30px;
  width: 440px;
  margin: 24px 0 0 4px;
  display: flex;
  align-items: center;
`;
const Track = styled.span<{ $w?: number; $on?: boolean }>`
  height: 8px;
  margin-top: -2px;
  border-radius: 4px;
  background: ${(p) => (p.$on ? BLUE : "#cacaca")};
  ${(p) => (p.$w ? `width: ${p.$w}px;` : "flex: 1;")}
`;
const Thumb = styled.span`
  width: 30px;
  height: 30px;
  margin: 0 -8px 0 -4px;
  border-radius: 50%;
  background: ${BLUE};
  z-index: 1;
`;
const Note = styled.p`
  margin-top: 56px;
  width: 480px;
  font-size: 26px;
  line-height: 37.45px;
  white-space: nowrap;
`;
const NoteLine = styled.span<{ $track: number }>`
  display: block;
  letter-spacing: ${(p) => p.$track}px;
`;
const Controls = styled.div`
  position: relative;
  width: 298px;
  padding: 28px 0 0;
  display: flex;
  flex-direction: column;
  align-items: flex-end;
`;
const ControlGroup = styled.div<{ $h: number; $tint?: boolean }>`
  width: 64px;
  height: ${(p) => p.$h}px;
  margin: 0 20px 16px 0;
  display: flex;
  flex-direction: column;
  background: ${(p) => (p.$tint ? "#fafafa" : "#fff")};
  box-shadow: 0 0 100px rgba(50, 50, 50, 0.16);
`;
const Control = styled.button`
  flex: 1;
  display: flex;
  align-items: center;
  justify-content: center;
  padding-bottom: 3px;
`;
const Overview = styled.div`
  width: 90px;
  height: 90px;
  margin: auto 36px 24px 0;
  border: 4px solid ${BLUE};
  box-shadow: 0 0 70px rgba(50, 50, 50, 0.14);
`;
const Credit = styled.div`
  height: 28px;
  align-self: stretch;
  display: flex;
  align-items: center;
  padding: 0 0 2px 5px;
  font-size: 20.5px;
  white-space: nowrap;
  letter-spacing: 0.55px;
  border-radius: 6px;
  background: rgba(255, 255, 255, 0.7);
`;
const CreditLink = styled.a`
  display: flex;
  align-items: center;
  gap: 8px;
  margin: 0 10px 0 6px;
  color: ${BLUE};
`;
const Version = styled.span`
  letter-spacing: -1.2px;
`;

const LayerHeader = ({ gap, lines }: { gap?: number; lines: [string, number][] }) => (
  <LayerHead $gap={gap}>
    <Handle>{[0, 1, 2, 3, 4, 5].map((i) => <HandleDot key={i} />)}</Handle>
    <LayerTitle>{lines.map(([t, k]) => <TitleLine key={t} $track={k}>{t}</TitleLine>)}</LayerTitle>
    <CloseIcon viewBox="0 0 20 20"><path d="M1 1L19 19M19 1L1 19" stroke={BLUE} strokeWidth="2.800" /></CloseIcon>
  </LayerHead>
);

const CLASSES = [
  ["#f6e2b2", "0-500"],
  ["#edce86", "500 - 1500"],
  ["#f5c12f", "1500 - 3000"],
  ["#3e9b9c", "3000 - 4500"],
  ["#39344d", "4500 - 6500"],
];

const NOTE: [string, number][] = [
  ["FDEP soit l’indice de désavantage", 1.1],
  ["social est construit à l’échelle des", 1.12],
  ["communes, des cantons et des", 1.37],
  ["régions en utilisant : le recensement", 1.12],
  ["de la population et les données de", 1.28],
  ["déclarations d’impôt (INSEE). Quatre", 1.3],
  ["variables ont été retenues : le revenu", 1.08],
  ["médian par unité de consommation", 1.47],
  ["dans le ménage, le pourcentage de", 1.3],
  ["bacheliers dans la population de", 1.38],
  ["plus de 15 ans, le pourcentage", 1.02],
  ["d’ouvriers dans la population active", 1.25],
  ["et le taux de chômage. S", 1.2],
];

export default function App() {
  return (
    <Page>
      <GlobalStyle />
      <Header>
        <MenuButton aria-label="Menu"><MenuBar /><MenuBar /><MenuBar /></MenuButton>
        <Brand />
        <SiteTitle>La santé dans un projet de territoire</SiteTitle>
        <Search>
          <Field>Rechercher</Field>
          <SearchOptions aria-label="Options">
            <svg width="10" height="30" viewBox="0 0 10 30" fill="#fff"><circle cx="5" cy="5.500" r="4" /><circle cx="5" cy="14.800" r="4" /><circle cx="5" cy="24.100" r="4" /></svg>
          </SearchOptions>
        </Search>
        <HomeLink viewBox="0 0 36 38" fill="none" stroke={BLUE} strokeWidth="3">
          <path d="M1.500 19L18 5L34.500 19M6 17V33.500Q6 34.500 7 34.500H29Q30 34.500 30 33.500V17M18 23V33.500" />
        </HomeLink>
      </Header>
      <Body>
        <Sidebar>
          <Theme>
            <ThemeIcon $inset={39} $slot={106.5}><Globe /></ThemeIcon>
            <ThemeLabel>Repères administratifs et dynamiques territoriales</ThemeLabel>
          </Theme>
          <Theme $gap={50}>
            <ThemeIcon $inset={42} $slot={113}><FaAsterisk size={36} color="#333" /></ThemeIcon>
            <ThemeLabel>Caractéristiques populationnelles</ThemeLabel>
          </Theme>
          <Group $gap={40}>Indicateurs de vulnérabilité</Group>
          <Choice $gap={46} $track={0.2}><Radio><RadioDot /></Radio><span>FDEP Ile-de-France à l'IRIS</span></Choice>
          <Choice $gap={52} $track={0.48}><Radio /><span>Taux de bénéficiaires CMU-<br />C (RG)</span></Choice>
          <Group $gap={54}>Etats de santé des populations</Group>
          <Theme $gap={58}>
            <ThemeIcon $inset={38} $slot={113}><FaCity size={44} color="#333" /></ThemeIcon>
            <ThemeLabel $track={0.86}>Milieux et environnements urbains</ThemeLabel>
          </Theme>
          <Theme $gap={50}>
            <ThemeIcon $inset={44} $slot={117}><FaPlusSquare size={35} color="#333" /></ThemeIcon>
            <ThemeLabel $track={0.86}>Offres de santé</ThemeLabel>
          </Theme>
          <Theme $gap={59}>
            <ThemeIcon $inset={44} $slot={117.5}><FaStreetView size={35} color="#333" /></ThemeIcon>
            <ThemeLabel>Démographie</ThemeLabel>
          </Theme>
        </Sidebar>
        <MapArea>
          <MapCanvas />
          <LegendColumn>
            <ToolRow>
              <ToolButton $w={66} aria-label="Légende">
                <svg width="28" height="24" viewBox="0 0 28 24" fill="#f4f4ff">
                  {[0, 6.5, 13, 19.5].map((y) => <g key={y}><rect x="0.500" y={y} width="5.500" height="4.500" rx="1" /><rect x="7.500" y={y} width="20" height="4.500" rx="1" /></g>)}
                </svg>
              </ToolButton>
              <ToolButton $w={64} aria-label="Tout supprimer">
                <svg width="26" height="30" viewBox="0 0 26 30" fill="none" stroke="#f4f4ff" strokeWidth="2.200">
                  <path d="M1 5.500H25M8.500 5V1.500H17.500V5" /><path d="M3.500 8H22.500V26H3.500ZM7.800 9V25M11.300 9V25M14.800 9V25M18.300 9V25" strokeWidth="1.900" />
                </svg>
              </ToolButton>
            </ToolRow>
            <Legend>
              <LayerHeader lines={[["Contours départements", 1.95], ["Ile-de-France", 1.3]]} />
              <OutlineKey />
              <Expand viewBox="0 0 20 14"><path d="M2.500 2.500L10 9.800L17.500 2.500" fill="none" stroke="#777" strokeWidth="4.600" /></Expand>
              <LayerHeader gap={64} lines={[["FDEP Ile-de-France à l'IRIS", 1.32]]} />
              <Classes>
                {CLASSES.map(([color, label]) => <ClassRow key={label}><Swatch $color={color} />{label}</ClassRow>)}
              </Classes>
              <OpacityLabel>Opacité</OpacityLabel>
              <Slider><Track $w={292} $on /><Thumb /><Track /></Slider>
              <Note>{NOTE.map(([t, k]) => <NoteLine key={t} $track={k}>{t}</NoteLine>)}</Note>
            </Legend>
          </LegendColumn>
          <Controls>
            <ControlGroup $h={164} $tint>
              <Control aria-label="Zoom avant"><svg width="24" height="24" viewBox="0 0 24 24"><path d="M8 1.500h6v8h8v6h-8v8h-6v-8h-8v-6h8Z" fill="#333" /></svg></Control>
              <Control aria-label="Vue initiale"><svg width="26" height="26" viewBox="0 0 26 26"><path d="M13.500 0L26 12H22.500V24.500H16.500V16.500H10.500V24.500H4.500V12H1Z" fill="#333" /></svg></Control>
              <Control aria-label="Zoom arrière"><svg width="20" height="8" viewBox="0 0 20 8"><rect x="2" y="1" width="18" height="6" rx="1" fill="#333" /></svg></Control>
            </ControlGroup>
            <ControlGroup $h={218}>
              <Control aria-label="Partager"><svg width="24" height="20" viewBox="0 0 24 20"><path d="M12.500 0.500L24 9.500L12.500 18.800V13C7 12.500 3 14 0.700 18.500C0.500 10.500 5 6.500 12.500 6.200Z" fill="#333" /></svg></Control>
              <Control aria-label="Position"><svg width="20" height="24" viewBox="0 0 20 24"><path fillRule="evenodd" d="M10.500 0.500A8.700 8.700 0 0 1 19.200 9.200C19.200 13 15 18 10.500 23.500C6 18 1.800 13 1.800 9.200A8.700 8.700 0 0 1 10.500 0.500ZM10.500 4.500A4.600 4.600 0 1 0 10.500 13.700A4.600 4.600 0 1 0 10.500 4.500Z" fill="#333" /></svg></Control>
              <Control aria-label="Exporter"><svg width="24" height="24" viewBox="0 0 24 24"><circle cx="12" cy="11.500" r="10.200" fill="none" stroke="#333" strokeWidth="2.600" /><path d="M12 5L18 11H14.200V17.500H9.800V11H6Z" fill="#333" /></svg></Control>
              <Control aria-label="Image"><svg width="24" height="24" viewBox="0 0 24 24"><rect x="1.200" y="2.200" width="22" height="20" fill="none" stroke="#333" strokeWidth="2.200" /><circle cx="7" cy="8" r="2.600" fill="#333" /><path d="M1 21V17L6.500 14.500L11.500 16L17.500 8L23.500 14V22H1Z" fill="#333" /></svg></Control>
            </ControlGroup>
            <Overview>
              <svg width="82" height="82" viewBox="0 0 82 82">
                <rect width="82" height="82" fill="#fafaf9" />
                <path d="M20 0L24 10M36 0L42 10L50 12L54 0M66 2L70 14M76 0L80 8" stroke="#e3e5e5" fill="none" />
                <path d="M0 36C1 28 4 27 10 27L20 22L26 15L31 17L47 15L48 5C55 8 64 12 66 20L69 22L69 26L74 27L77 20L76 12L82 12V58C74 56 65 59 58 63L50 65C44 70 36 77 33 82H0Z" fill="#ccd1d4" stroke="#aeb5b8" strokeWidth="0.600" />
                <text x="37" y="43" fontFamily="'Open Sans', sans-serif" fontSize="5.500" fill="#6f8f9a" stroke="#eef2f3" strokeWidth="0.300" transform="rotate(-8 44 41)">Gulf of</text>
              </svg>
            </Overview>
            <Credit>
              Propulsé par
              <CreditLink>
                mviewer
                <svg width="18" height="18" viewBox="0 0 18 18" fill="none" stroke={BLUE} strokeWidth="2.200"><path d="M7.500 3.500H1.200V16.900H14.500V10.500M7 11L16.500 1.500M10.500 1.200H16.900V7.500" /></svg>
              </CreditLink>
              <Version>3.9.1</Version>
            </Credit>
          </Controls>
        </MapArea>
      </Body>
    </Page>
  );
}
